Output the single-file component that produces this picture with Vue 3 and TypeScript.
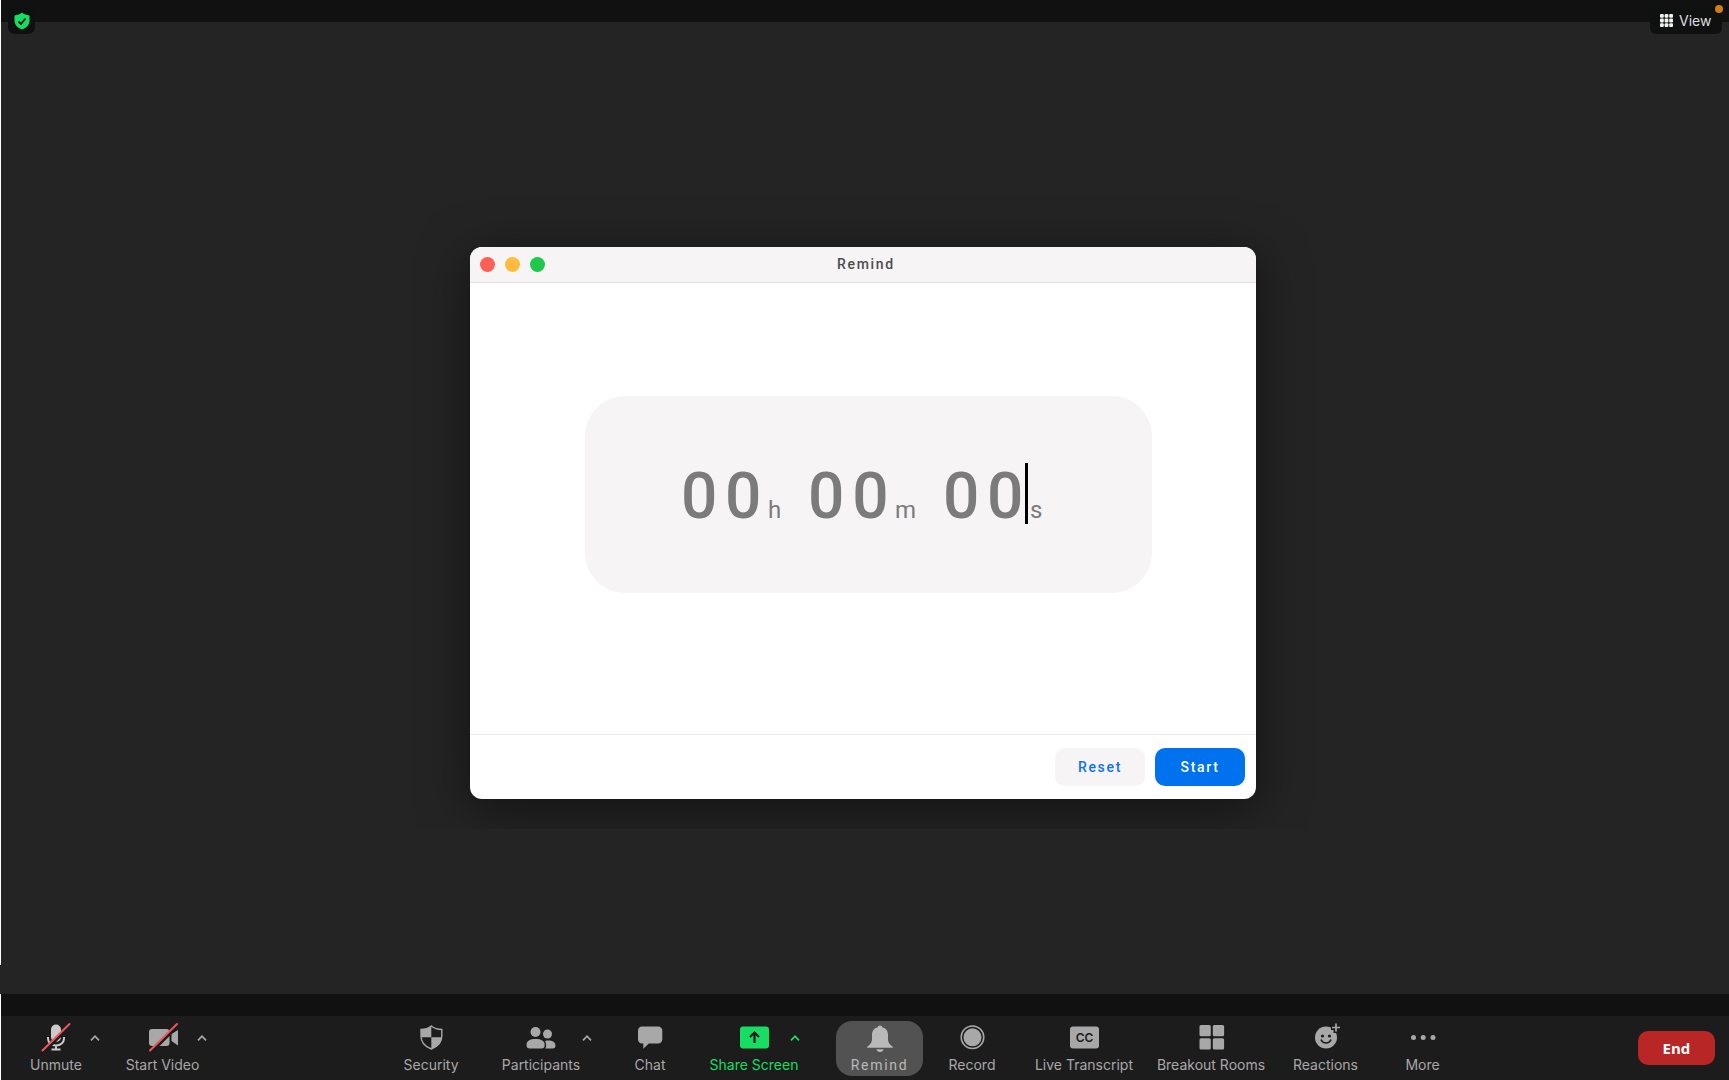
<script setup lang="ts">
import { ref } from 'vue'

interface Tool {
  id: string
  label: string
  menu?: boolean
}

const mediaTools: Tool[] = [
  { id: 'unmute', label: 'Unmute', menu: true },
  { id: 'video', label: 'Start Video', menu: true },
]

const meetingTools: Tool[] = [
  { id: 'security', label: 'Security' },
  { id: 'participants', label: 'Participants', menu: true },
  { id: 'chat', label: 'Chat' },
  { id: 'share', label: 'Share Screen', menu: true },
  { id: 'remind', label: 'Remind' },
  { id: 'record', label: 'Record' },
  { id: 'transcript', label: 'Live Transcript' },
  { id: 'breakout', label: 'Breakout Rooms' },
  { id: 'reactions', label: 'Reactions' },
  { id: 'more', label: 'More' },
]

const groups = [mediaTools, meetingTools]

const hours = ref('00')
const minutes = ref('00')
const seconds = ref('00')

function reset(): void {
  hours.value = '00'
  minutes.value = '00'
  seconds.value = '00'
}
</script>

<template>
  <div class="meeting">
    <header class="topbar">
      <button class="shield" type="button" aria-label="Meeting information">
        <svg width="16" height="18" viewBox="0 0 16 18">
          <path d="M8 0.500C10 2.300 12.500 3.200 15.500 3.400V8.500C15.500 12.800 12.500 15.800 8 17.500C3.500 15.800 0.500 12.800 0.500 8.500V3.400C3.500 3.200 6 2.300 8 0.500Z" fill="#17dd63" />
          <path d="M4.500 9.500L7 12L11.500 6.500" fill="none" stroke="#0e1110" stroke-width="1.800" />
        </svg>
      </button>
      <button class="view" type="button">
        <svg width="13" height="13" viewBox="0 0 13 13" fill="#f2f2f2">
          <template v-for="row in 3" :key="row">
            <rect v-for="col in 3" :key="col" :x="(col - 1) * 4.600" :y="(row - 1) * 4.600" width="3.800" height="3.800" rx="1" />
          </template>
        </svg>
        View
        <span class="dot"></span>
      </button>
    </header>

    <main class="stage">
      <section class="dialog" role="dialog" aria-labelledby="dialog-title">
        <header class="titlebar">
          <div class="lights">
            <button class="light close" type="button" aria-label="Close"></button>
            <button class="light minimize" type="button" aria-label="Minimize"></button>
            <button class="light zoom" type="button" aria-label="Zoom"></button>
          </div>
          <h1 id="dialog-title">Remind</h1>
        </header>
        <div class="body">
          <div class="timer">
            <div class="field">
              <input id="hours" v-model="hours" maxlength="2" />
              <label for="hours">h</label>
            </div>
            <div class="field">
              <input id="minutes" v-model="minutes" maxlength="2" />
              <label for="minutes">m</label>
            </div>
            <div class="field active">
              <input id="seconds" v-model="seconds" maxlength="2" />
              <label for="seconds">s</label>
            </div>
          </div>
        </div>
        <footer class="actions">
          <button class="action" type="button" @click="reset">Reset</button>
          <button class="action primary" type="button">Start</button>
        </footer>
      </section>
    </main>
    <div class="ledge"></div>
    <div class="band"></div>

    <nav class="toolbar" aria-label="Meeting controls">
      <div v-for="(group, index) in groups" :key="index" class="group">
        <div v-for="tool in group" :key="tool.id" class="cell" :class="tool.id">
          <button class="tool" type="button">
            <svg class="icon" width="32" height="28" viewBox="0 0 32 28" fill="currentColor">
              <g v-if="tool.id === 'unmute'">
                <rect x="11" y="0.500" width="10" height="17.500" rx="5" />
                <path d="M8 13V14.500C8 18.500 11.500 21.500 16 21.500S24 18.500 24 14.500V13M16 21.500V25.500M11.500 25.500H20.500" fill="none" stroke="currentColor" stroke-width="2" />
                <path d="M4 28L31 1" stroke="#1c1c1c" stroke-width="3" />
                <path d="M2.500 26.500L29.500 0" stroke="#ef5659" stroke-width="2" stroke-linecap="round" />
              </g>
              <g v-else-if="tool.id === 'video'">
                <rect x="2" y="5" width="20.500" height="17" rx="3" />
                <path d="M24.500 10L31 6V21.500L24.500 17Z" />
                <path d="M4.500 28L31.500 1" stroke="#1c1c1c" stroke-width="3" />
                <path d="M3 26.500L30 0" stroke="#ef5659" stroke-width="2" stroke-linecap="round" />
              </g>
              <g v-else-if="tool.id === 'security'">
                <path d="M16.300 2C19 4.300 22.500 5.500 26.800 5.500V12C26.800 18.500 23 22.500 16.300 25C9.700 22.500 6 18.500 6 12V5.500C10.200 5.500 13.600 4.300 16.300 2Z" fill="none" stroke="currentColor" stroke-width="1.400" />
                <path d="M16.300 2V13.300H6V5.500C10.200 5.500 13.600 4.300 16.300 2Z" />
                <path d="M16.300 13.300H26.800C26.400 19 23 22.500 16.300 25Z" />
              </g>
              <g v-else-if="tool.id === 'participants'">
                <circle cx="10.500" cy="8" r="5" />
                <circle cx="22.500" cy="10" r="4.500" />
                <path d="M1.500 20.500C1.500 17 5 15 10.500 15S19.700 17 19.700 20.500C19.700 23.500 18.500 24.500 16.500 24.500H4.700C2.700 24.500 1.500 23.500 1.500 20.500Z" />
                <path d="M20 17C25.500 15.500 30.500 17.500 30.500 21.500C30.500 23.700 29.500 24.500 27.700 24.500H20.300C21.500 22.500 21.500 19.500 20 17Z" />
              </g>
              <g v-else-if="tool.id === 'chat'">
                <path d="M8 2.500H24C26.500 2.500 28.300 4.200 28.300 6.500V15.500C28.300 17.800 26.500 19.500 24 19.500H14.800L9.300 24.800V19.500H8C5.700 19.500 4 17.800 4 15.500V6.500C4 4.200 5.700 2.500 8 2.500Z" />
              </g>
              <g v-else-if="tool.id === 'share'">
                <rect x="2" y="2.500" width="29" height="22" rx="3" />
                <path d="M16.500 19V9.500M12 13L16.500 8.500L21 13" fill="none" stroke="#1c1c1c" stroke-width="2.200" />
              </g>
              <g v-else-if="tool.id === 'remind'">
                <path d="M16 1.500C17.300 1.500 18 2.200 18.300 3.300C22 4.300 24 7.200 24 11V15C24 19 26 20.500 28.800 22.800V23.800H3.200V22.800C6 20.500 8 19 8 15V11C8 7.200 10 4.300 13.700 3.300C14 2.200 14.700 1.500 16 1.500Z" />
                <path d="M12.500 25.200H19.500C19.200 27 17.800 28 16 28S12.800 27 12.500 25.200Z" />
              </g>
              <g v-else-if="tool.id === 'record'">
                <circle cx="16.500" cy="13.300" r="11.300" fill="none" stroke="currentColor" stroke-width="1.500" />
                <circle cx="16.500" cy="13.300" r="9" />
              </g>
              <g v-else-if="tool.id === 'transcript'">
                <rect x="2" y="2.500" width="29" height="22" rx="3" />
                <text x="16.500" y="18" class="cc">CC</text>
              </g>
              <g v-else-if="tool.id === 'breakout'">
                <rect x="4.500" y="1" width="11.300" height="11.300" rx="1.500" />
                <rect x="17.800" y="1" width="11.300" height="11.300" rx="1.500" />
                <rect x="4.500" y="14.300" width="11.300" height="11.300" rx="1.500" />
                <rect x="17.800" y="14.300" width="11.300" height="11.300" rx="1.500" />
              </g>
              <g v-else-if="tool.id === 'reactions'">
                <circle cx="16" cy="13.500" r="11" />
                <path d="M26 -1V9M21 3.500H31" stroke="#1c1c1c" stroke-width="5" />
                <path d="M26 -0.500V7.500M22 3.500H30" stroke="currentColor" stroke-width="1.700" />
                <g fill="#1c1c1c">
                  <circle cx="12.500" cy="12" r="1.600" />
                  <circle cx="19.500" cy="12" r="1.600" />
                  <path d="M11 15.500C12 18 13.500 19 16 19S20 18 21 15.500" fill="none" stroke="#1c1c1c" stroke-width="1.700" />
                </g>
              </g>
              <g v-else>
                <circle cx="6.500" cy="13.500" r="2.500" />
                <circle cx="16.200" cy="13.500" r="2.500" />
                <circle cx="26" cy="13.500" r="2.500" />
              </g>
            </svg>
            <span>{{ tool.label }}</span>
          </button>
          <button v-if="tool.menu" class="caret" type="button" :aria-label="tool.label + ' options'">
            <svg width="10" height="6" viewBox="0 0 10 6">
              <path d="M1 5.300L5 1.200L9 5.300" fill="none" stroke="currentColor" stroke-width="1.700" />
            </svg>
          </button>
        </div>
      </div>
      <button class="end" type="button">End</button>
    </nav>
  </div>
</template>

<style>
body {
  margin: 0;
  background: #242424;
}
</style>

<style scoped>
* {
  box-sizing: border-box;
}

button {
  margin: 0;
  padding: 0;
  border: 0;
  background: none;
  color: inherit;
  font: inherit;
}

.meeting {
  display: flex;
  flex-direction: column;
  min-height: 100vh;
  border-left: 1px solid #fff;
  background: #242424;
  color: #a8a8a8;
  font: 14px/18px Inter, sans-serif;
}

.topbar {
  display: flex;
  justify-content: space-between;
  height: 22px;
  padding: 7px 7px 0;
  background: #111;
}

.shield {
  display: grid;
  place-items: center;
  width: 27px;
  height: 27px;
  border-radius: 7px;
  background: #0e1110;
}

.shield svg {
  display: block;
}

.view {
  position: relative;
  display: flex;
  align-items: center;
  gap: 6px;
  width: 72px;
  height: 27px;
  padding-left: 10px;
  border-radius: 6px;
  background: #0e1110;
  color: #dedede;
}

.dot {
  position: absolute;
  top: -2px;
  right: -1px;
  width: 8px;
  height: 8px;
  border-radius: 50%;
  background: #d27d14;
}

.stage {
  display: flex;
  flex: 1;
  justify-content: center;
  align-items: flex-start;
  padding: 225px 4px 24px 0;
}

.dialog {
  width: 786px;
  border-radius: 12px;
  background: #fff;
  box-shadow: 0 10px 50px rgba(0, 0, 0, 0.5);
  clip-path: inset(-80px -80px -30px -80px);
  font-family: Roboto, sans-serif;
}

.titlebar {
  display: grid;
  grid-template-columns: 1fr auto 1fr;
  align-items: center;
  height: 36px;
  padding: 0 10px;
  border-bottom: 1px solid #e3dfe1;
  border-radius: 12px 12px 0 0;
  background: #f6f4f5;
}

.lights {
  display: flex;
  gap: 10px;
}

.light {
  width: 15px;
  height: 15px;
  border-radius: 50%;
}

.close {
  background: #ff5f57;
}

.minimize {
  background: #ffbc3c;
}

.zoom {
  background: #1fc84b;
}

h1 {
  margin: 0;
  padding: 0 0 2px 6px;
  color: #4c4c4c;
  font-size: 14px;
  font-weight: 500;
  line-height: 18px;
  letter-spacing: 0.12em;
}

.body {
  padding: 113px 104px 141px 115px;
}

.timer {
  display: flex;
  align-items: center;
  gap: 24px;
  height: 197px;
  padding: 4px 0 0 96px;
  border-radius: 40px;
  background: #f6f4f5;
  color: #7b7b7b;
}

.field {
  position: relative;
  display: flex;
  align-items: baseline;
}

.field input {
  width: 87px;
  height: 76px;
  padding: 0;
  border: 0;
  outline: 0;
  background: none;
  color: inherit;
  font: 500 64px/76px Roboto, sans-serif;
  letter-spacing: 0.12em;
}

.field label {
  font-size: 24px;
  line-height: 28px;
  letter-spacing: 0.12em;
}

.active::after {
  content: '';
  position: absolute;
  top: 4px;
  left: 82px;
  width: 3px;
  height: 61px;
  background: #000;
}

.actions {
  display: flex;
  justify-content: flex-end;
  gap: 10px;
  height: 65px;
  padding: 13px 11px 0;
  border-top: 1px solid #e8eaf0;
}

.action {
  width: 90px;
  height: 38px;
  border-radius: 10px;
  background: #f6f4f5;
  color: #0e72ed;
  font-size: 14px;
  font-weight: 500;
  letter-spacing: 0.12em;
}

.primary {
  background: #0072ed;
  color: #fff;
}

.ledge {
  height: 29px;
  margin-left: -1px;
  background: #242424;
}

.band {
  height: 22px;
  background: #111;
}

.toolbar {
  display: flex;
  justify-content: space-between;
  height: 64px;
  padding-right: 14px;
  background: #1c1c1c;
}

.group {
  display: flex;
}

.cell {
  position: relative;
  width: 98px;
}

.tool {
  display: flex;
  flex-direction: column;
  align-items: center;
  gap: 4px;
  width: 100%;
  padding-top: 8px;
  white-space: nowrap;
}

.icon {
  display: block;
  overflow: visible;
}

.unmute,
.share {
  width: 110px;
}

.unmute .icon {
  color: #cacaca;
}

.video {
  width: 103px;
}

.security {
  width: 100px;
}

.participants {
  width: 120px;
}

.share {
  color: #17dd63;
}

.remind {
  width: 87px;
  margin-left: 27px;
  color: #b9b9b9;
  font-family: Roboto, sans-serif;
}

.remind .tool {
  height: 55px;
  margin-top: 5px;
  padding-top: 3px;
  border-radius: 16px;
  background: #525252;
  letter-spacing: 0.12em;
}

.transcript {
  width: 126px;
}

.breakout {
  width: 128px;
}

.reactions {
  width: 101px;
}

.more {
  width: 93px;
}

.cc {
  fill: #1c1c1c;
  font: 600 12px Inter, sans-serif;
  text-anchor: middle;
}

.caret {
  position: absolute;
  top: 14px;
  left: calc(50% + 31px);
  display: grid;
  place-items: center;
  width: 16px;
  height: 16px;
}

.share .caret {
  left: calc(50% + 33px);
}

.participants .caret {
  left: calc(50% + 38px);
}

.end {
  width: 77px;
  height: 34px;
  margin: 15px 0 0 2px;
  border-radius: 10px;
  background: #b82626;
  color: #fff;
  font: 700 15px/20px "Open Sans", sans-serif;
}
</style>
